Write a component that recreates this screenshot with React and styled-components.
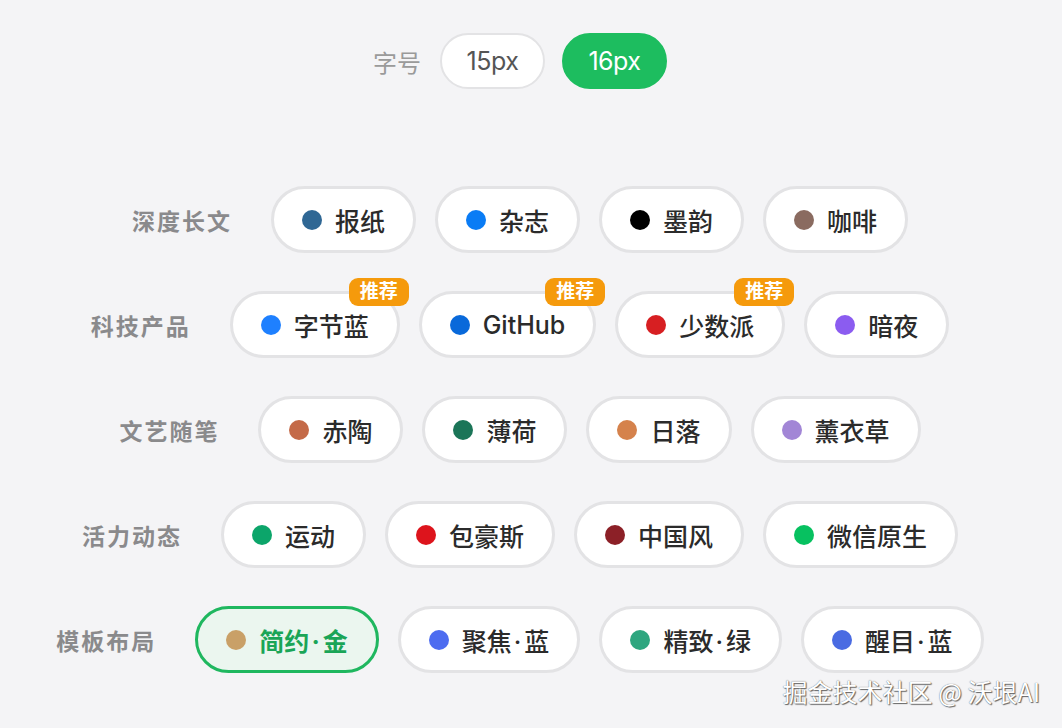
import React from "react";
import styled, { createGlobalStyle } from "styled-components";

const GlobalStyle = createGlobalStyle`
  html, body {
    margin: 0;
    padding: 0;
    background: #f4f4f6;
  }
  body {
    font-family: Inter, "Noto Sans CJK SC", sans-serif;
  }
`;

const groups = [
  {
    label: "深度长文",
    items: [
      { name: "报纸", color: "#2f6794" },
      { name: "杂志", color: "#0a7cf5" },
      { name: "墨韵", color: "#000000" },
      { name: "咖啡", color: "#8a6b60" },
    ],
  },
  {
    label: "科技产品",
    items: [
      { name: "字节蓝", color: "#1e80ff", tag: true },
      { name: "GitHub", color: "#0969da", tag: true },
      { name: "少数派", color: "#d71f22", tag: true },
      { name: "暗夜", color: "#8b5cf0" },
    ],
  },
  {
    label: "文艺随笔",
    items: [
      { name: "赤陶", color: "#c46a48" },
      { name: "薄荷", color: "#1b7558" },
      { name: "日落", color: "#d5824c" },
      { name: "薰衣草", color: "#a286d6" },
    ],
  },
  {
    label: "活力动态",
    items: [
      { name: "运动", color: "#0ca56a" },
      { name: "包豪斯", color: "#dd141c" },
      { name: "中国风", color: "#8c2027" },
      { name: "微信原生", color: "#07c160" },
    ],
  },
  {
    label: "模板布局",
    items: [
      { name: "简约·金", color: "#c9a067", active: true },
      { name: "聚焦·蓝", color: "#4d6cf0" },
      { name: "精致·绿", color: "#2ea67f" },
      { name: "醒目·蓝", color: "#4a6be2" },
    ],
  },
];

// split "简约·金" so the middle dot gets a bit of breathing room
const renderName = (name) => {
  const parts = name.split("·");
  if (parts.length < 2) return name;
  return (
    <>
      {parts[0]}
      <Sep>·</Sep>
      {parts[1]}
    </>
  );
};

const App = () => {
  return (
    <Page>
      <GlobalStyle />
      <Content>
        <SizeRow>
          <SizeLabel>字号</SizeLabel>
          <SizeChip>15px</SizeChip>
          <SizeChip $active>16px</SizeChip>
        </SizeRow>
        <Groups>
          {groups.map((group) => (
            <Row key={group.label}>
              <RowLabel>{group.label}</RowLabel>
              <Chips>
                {group.items.map((item) => (
                  <Chip key={item.name} $active={item.active}>
                    <Dot $color={item.color} />
                    <span>{renderName(item.name)}</span>
                    {item.tag && <Badge>推荐</Badge>}
                  </Chip>
                ))}
              </Chips>
            </Row>
          ))}
        </Groups>
      </Content>
      <Watermark>掘金技术社区 @ 沃垠AI</Watermark>
    </Page>
  );
};

const Page = styled.div`
  position: relative;
  width: 1062px;
  height: 728px;
  overflow: hidden;
  background: #f4f4f6;
`;

const Content = styled.div`
  width: 1040px;
  padding-top: 33px;
  display: flex;
  flex-direction: column;
  align-items: center;
`;

const SizeRow = styled.div`
  display: flex;
  align-items: center;
  gap: 17px;
`;

const SizeLabel = styled.span`
  font-size: 24px;
  color: #9a9a9a;
  margin-right: 2px;
`;

const SizeChip = styled.div`
  box-sizing: border-box;
  height: 56px;
  width: 105px;
  border-radius: 28px;
  display: flex;
  align-items: center;
  justify-content: center;
  font-size: 25px;
  letter-spacing: -0.5px;
  color: ${(p) => (p.$active ? "#ffffff" : "#555555")};
  background: ${(p) => (p.$active ? "#1dbd5f" : "#ffffff")};
  border: 2px solid ${(p) => (p.$active ? "#1dbd5f" : "#e3e3e5")};
`;

const Groups = styled.div`
  margin-top: 97px;
  display: flex;
  flex-direction: column;
  gap: 38px;
`;

const Row = styled.div`
  display: flex;
  align-items: center;
  justify-content: center;
  gap: 39px;
`;

const RowLabel = styled.span`
  font-size: 23px;
  font-weight: 700;
  color: #8a8a8c;
  letter-spacing: 2px;
`;

const Chips = styled.div`
  display: flex;
  gap: 19px;
`;

const Chip = styled.div`
  position: relative;
  box-sizing: border-box;
  height: 67px;
  padding: 0 28px;
  border-radius: 34px;
  display: flex;
  align-items: center;
  gap: 13px;
  font-size: 25px;
  font-weight: ${(p) => (p.$active ? 700 : 500)};
  color: ${(p) => (p.$active ? "#1aa557" : "#2b2b2b")};
  background: ${(p) => (p.$active ? "#ebf6ef" : "#ffffff")};
  border: 3px solid ${(p) => (p.$active ? "#1fb75f" : "#e3e3e5")};
  white-space: nowrap;
`;

const Sep = styled.span`
  margin: 0 3px 0 2px;
`;

const Dot = styled.span`
  width: 20px;
  height: 20px;
  border-radius: 50%;
  background: ${(p) => p.$color};
  flex-shrink: 0;
`;

const Badge = styled.span`
  position: absolute;
  top: -16px;
  right: -12px;
  height: 28px;
  padding: 0 11px;
  border-radius: 9px;
  background: #f59a0c;
  color: #ffffff;
  font-size: 19px;
  font-weight: 700;
  line-height: 28px;
`;

const Watermark = styled.div`
  position: absolute;
  right: 22px;
  bottom: 19px;
  font-size: 25px;
  color: #ffffff;
  text-shadow: 0 0 1px #555, 1px 1px 1px #666;
  font-family: "Noto Sans CJK SC", sans-serif;
`;

export default App;
